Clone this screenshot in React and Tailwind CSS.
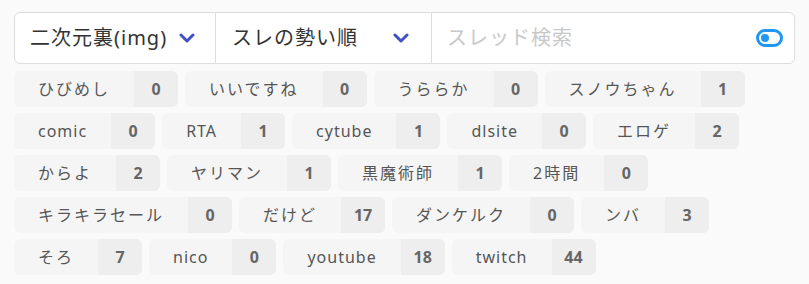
import React from 'react';

const tags = [
  ['ひびめし', 0],
  ['いいですね', 0],
  ['うららか', 0],
  ['スノウちゃん', 1],
  ['comic', 0],
  ['RTA', 1],
  ['cytube', 1],
  ['dlsite', 0],
  ['エロゲ', 2],
  ['からよ', 2],
  ['ヤリマン', 1],
  ['黒魔術師', 1],
  ['2時間', 0],
  ['キラキラセール', 0],
  ['だけど', 17],
  ['ダンケルク', 0],
  ['ンバ', 3],
  ['そろ', 7],
  ['nico', 0],
  ['youtube', 18],
  ['twitch', 44],
];

const Chevron = () => (
  <svg width="16" height="10" viewBox="0 0 16 10" className="shrink-0">
    <path d="M2 2 L8 8 L14 2" fill="none" stroke="#4150c4" strokeWidth="3" strokeLinecap="round" strokeLinejoin="round" />
  </svg>
);

const ToggleIcon = () => (
  <svg width="27" height="18" viewBox="0 0 27 18">
    <rect x="1.5" y="1.5" width="24" height="15" rx="7.5" fill="none" stroke="#2196f3" strokeWidth="3" />
    <circle cx="9" cy="9" r="4" fill="#2196f3" />
  </svg>
);

// japanese glyphs render a touch wider in the original
const isAscii = (s) => /^[\x00-\x7f]*$/.test(s);

const Tag = ({ name, count }) => (
  <div className="flex h-[36px] rounded-md overflow-hidden bg-[#f5f5f5] text-[16px]">
    <span
      className={`flex items-center px-6 text-[#555] ${
        isAscii(name) ? 'tracking-[1px]' : 'tracking-[2px]'
      }`}
    >
      {name}
    </span>
    <span className="flex items-center justify-center w-[44px] bg-[#eeeeee] font-bold text-[#666]">
      {count}
    </span>
  </div>
);

export default function App() {
  return (
    <div
      className="min-h-[284px] bg-[#fafafa] px-[14px] pt-[12px]"
      style={{ fontFamily: '"Noto Sans", "Noto Sans CJK JP", sans-serif' }}
    >
      {/* search bar */}
      <div className="flex h-[52px] bg-white border border-[#dddddd] rounded-md text-[20px] tracking-[1px]">
        <div className="flex items-center justify-between w-[201px] pl-[15px] pr-[20px] border-r border-[#dddddd] text-[#333]">
          <span>二次元裏(img)</span>
          <Chevron />
        </div>
        <div className="flex items-center justify-between w-[216px] pl-[16px] pr-[22px] border-r border-[#dddddd] text-[#333]">
          <span>スレの勢い順</span>
          <Chevron />
        </div>
        <div className="flex flex-1 items-center justify-between pl-[15px] pr-[11px]">
          <span className="text-[#c8c8c8]">スレッド検索</span>
          <ToggleIcon />
        </div>
      </div>

      {/* tags */}
      <div className="flex flex-wrap gap-x-[7px] gap-y-[6px] mt-[7px]">
        {tags.map(([name, count]) => (
          <Tag key={name} name={name} count={count} />
        ))}
      </div>
    </div>
  );
}
